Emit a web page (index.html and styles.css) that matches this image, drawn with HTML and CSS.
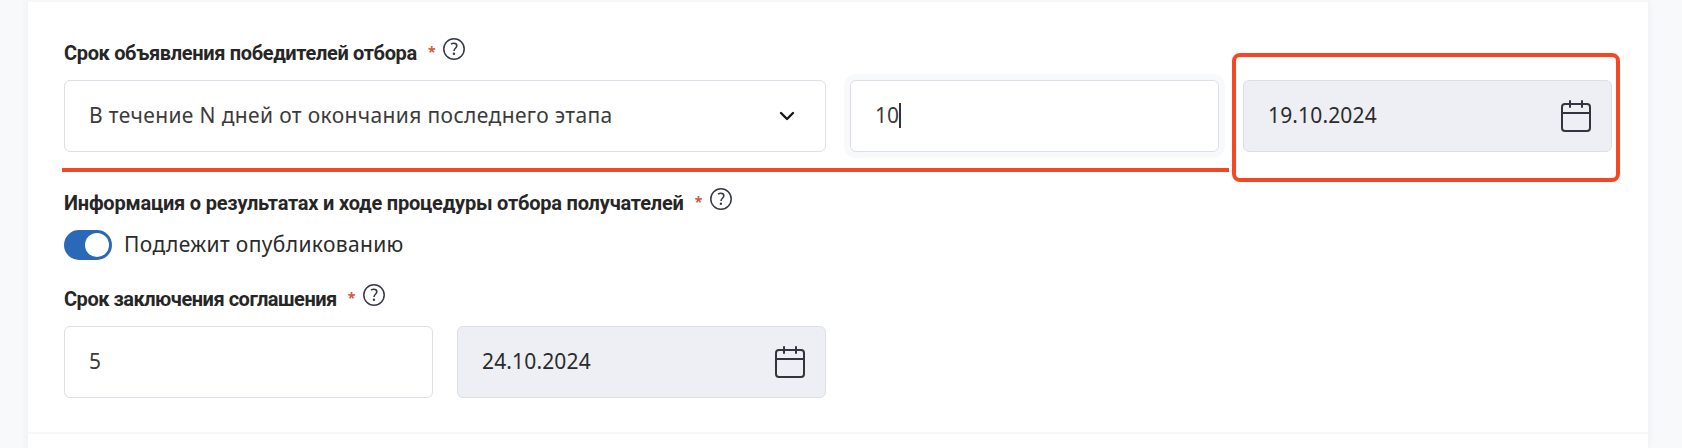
FILE: index.html
```
<!DOCTYPE html>
<html lang="ru">
<head>
<meta charset="utf-8">
<title>Сроки отбора</title>
<link rel="stylesheet" href="styles.css">
</head>
<body>
<svg class="sprite" aria-hidden="true">
  <symbol id="help" viewBox="0 0 22 22">
    <circle cx="11" cy="11" r="10.2" fill="none" stroke="currentColor" stroke-width="1.5"/>
    <path d="M8 6.1C8.8 5.6 9.7 5.3 10.8 5.3C12.7 5.3 13.8 6.3 13.8 7.8C13.8 10.2 11 10.4 11 13" fill="none" stroke="currentColor" stroke-width="1.6"/>
    <circle cx="10.9" cy="15.8" r="1.2" fill="currentColor"/>
  </symbol>
  <symbol id="calendar" viewBox="0 0 30 34">
    <rect x="1" y="5" width="28" height="27" rx="3" fill="none" stroke="currentColor" stroke-width="2"/>
    <path d="M1 14H29M9 2V8M21 2V8" fill="none" stroke="currentColor" stroke-width="2" stroke-linecap="round"/>
  </symbol>
</svg>
<main class="card">
  <section class="group">
    <div class="label"><span class="label-text">Срок объявления победителей отбора</span><span class="required">*</span><svg class="help"><use href="#help"/></svg></div>
    <div class="grid">
      <div class="field select"><span class="text">В течение N дней от окончания последнего этапа</span><svg class="chevron" viewBox="0 0 16 10"><path d="M2 2L8 8L14 2" fill="none" stroke="currentColor" stroke-width="2.4" stroke-linecap="round" stroke-linejoin="round"/></svg></div>
      <div class="field focused"><span>10</span><i class="caret"></i></div>
      <div class="field date"><span>19.10.2024</span><svg class="calendar"><use href="#calendar"/></svg><i class="highlight"></i></div>
      <i class="underline"></i>
    </div>
  </section>
  <section class="group publish">
    <div class="label"><span class="label-text">Информация о результатах и ходе процедуры отбора получателей</span><span class="required">*</span><svg class="help"><use href="#help"/></svg></div>
    <div class="toggle-row"><span class="toggle"><i class="knob"></i></span><span class="text">Подлежит опубликованию</span></div>
  </section>
  <section class="group agreement">
    <div class="label"><span class="label-text">Срок заключения соглашения</span><span class="required">*</span><svg class="help"><use href="#help"/></svg></div>
    <div class="grid">
      <div class="field"><span>5</span></div>
      <div class="field date"><span>24.10.2024</span><svg class="calendar"><use href="#calendar"/></svg></div>
    </div>
  </section>
</main>
</body>
</html>
```
FILE: styles.css
```
* { box-sizing: border-box; }
body {
  margin: 0;
  height: 448px;
  padding: 0 34px 0 28px;
  overflow: hidden;
  background: #f8f9fb;
  color: #2b2b2b;
  font: 21px/30px "Noto Sans", sans-serif;
}
.sprite { display: none; }
.card {
  height: 448px;
  padding: 36px 36px 0;
  border-top: 2px solid #f8f8f9;
  background: #fff;
  box-shadow: 0 0 8px rgba(40, 50, 70, .06);
}
.publish { margin-top: 36px; }
.agreement {
  margin: 24px -36px 0;
  padding: 0 36px 34px;
  border-bottom: 2px solid #f8f8f9;
}
.label { display: flex; height: 42px; }
.label-text {
  font: 700 20px/30px Roboto, sans-serif;
  letter-spacing: -.34px;
  color: #262626;
}
.publish .label-text { letter-spacing: -.2px; }
.agreement .label-text { letter-spacing: -.48px; }
.required {
  width: 8px;
  margin: 4px 7px 0 11px;
  font: 700 14px/20px "Noto Sans", sans-serif;
  color: #d4573a;
}
.help { width: 22px; height: 22px; color: #363a45; }
.grid {
  position: relative;
  display: grid;
  grid-template-columns: repeat(4, 1fr);
  gap: 24px;
}
.field {
  position: relative;
  display: flex;
  align-items: center;
  height: 72px;
  padding: 0 20px 2px 24px;
  border: 1px solid #dcdfe8;
  border-radius: 6px;
  background: #fff;
  color: #3b3b3b;
}
.select {
  grid-column: span 2;
  justify-content: space-between;
  padding-right: 30px;
}
.text { letter-spacing: .36px; }
.chevron { width: 16px; height: 10px; margin-top: 2px; color: #15171c; }
.focused { box-shadow: 0 0 0 6px #f8f9fb; }
.caret { width: 2px; height: 25px; background: #333; }
.date {
  justify-content: space-between;
  letter-spacing: .15px;
  background: #eeeff4;
  color: #2b2b2b;
}
.calendar { width: 30px; height: 34px; margin-top: 2px; color: #32353f; }
.highlight {
  position: absolute;
  inset: -28px -9px -31px -12px;
  border: 4px solid #f64725;
  border-radius: 8px;
}
.underline {
  position: absolute;
  left: -2px;
  bottom: -20px;
  width: 1167px;
  height: 4px;
  background: #f64725;
}
.toggle-row { display: flex; gap: 12px; height: 30px; line-height: 28px; }
.toggle {
  display: flex;
  justify-content: flex-end;
  width: 48px;
  height: 30px;
  padding: 3px;
  border-radius: 15px;
  background: #2a69b8;
}
.knob { width: 24px; height: 24px; border-radius: 50%; background: #fff; }
```
